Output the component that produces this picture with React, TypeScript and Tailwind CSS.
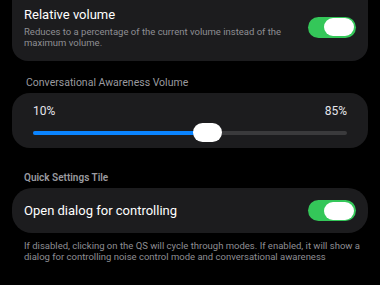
function Toggle() {
  return (
    <div className="flex h-[21px] w-[48px] items-center justify-end rounded-full bg-[#34c759] px-[2px]">
      <div className="h-[18px] w-[30px] rounded-full bg-white" />
    </div>
  );
}

export default function App() {
  return (
    <div
      className="h-[285px] w-[380px] overflow-hidden bg-black px-[12px] text-white"
      style={{ fontFamily: 'Roboto, "Noto Sans", sans-serif' }}
    >
      <div className="flex items-center rounded-b-[16px] bg-[#1c1c1e] pb-[13px] pl-[12px] pr-[12px] pt-[6px]">
        <div className="flex-1">
          <div className="text-[13px] leading-[18px]">Relative volume</div>
          <div className="mt-[2px] w-[262px] text-[9.5px] leading-[11px] text-[#8e8e93]">
            Reduces to a percentage of the current volume instead of the maximum volume.
          </div>
        </div>
        <Toggle />
      </div>

      <div className="mt-[15px] pl-[14px] text-[10.5px] leading-[14px] text-[#9a9a9f]">
        Conversational Awareness Volume
      </div>
      <div className="mt-[3px] rounded-[18px] bg-[#1c1c1e] px-[21px] pb-[5px] pt-[10px]">
        <div className="flex justify-between text-[12px] leading-[16px] text-[#e5e5ea]">
          <span>10%</span>
          <span>85%</span>
        </div>
        <div className="relative mt-[4px] h-[20px]">
          <div className="absolute left-0 right-0 top-[8px] h-[4px] rounded-full bg-[#3a3a3c]" />
          <div className="absolute left-0 top-[8px] h-[4px] w-[165px] rounded-full bg-[#0a84ff]" />
          <div className="absolute left-[160px] top-0 h-[19px] w-[29px] rounded-full bg-white" />
        </div>
      </div>

      <div className="mt-[23px] pl-[12px] text-[10px] font-semibold leading-[14px] text-[#9a9a9f]">
        Quick Settings Tile
      </div>
      <div className="mt-[3px] flex h-[45px] items-center rounded-[20px] bg-[#1c1c1e] pl-[12px] pr-[12px]">
        <div className="flex-1 text-[13px] leading-[18px]">Open dialog for controlling</div>
        <Toggle />
      </div>
      <div className="mt-[7px] pl-[12px] pr-[8px] text-[9.5px] leading-[11px] text-[#8e8e93]">
        If disabled, clicking on the QS will cycle through modes. If enabled, it will show a dialog for controlling noise control mode and conversational awareness
      </div>
    </div>
  );
}
